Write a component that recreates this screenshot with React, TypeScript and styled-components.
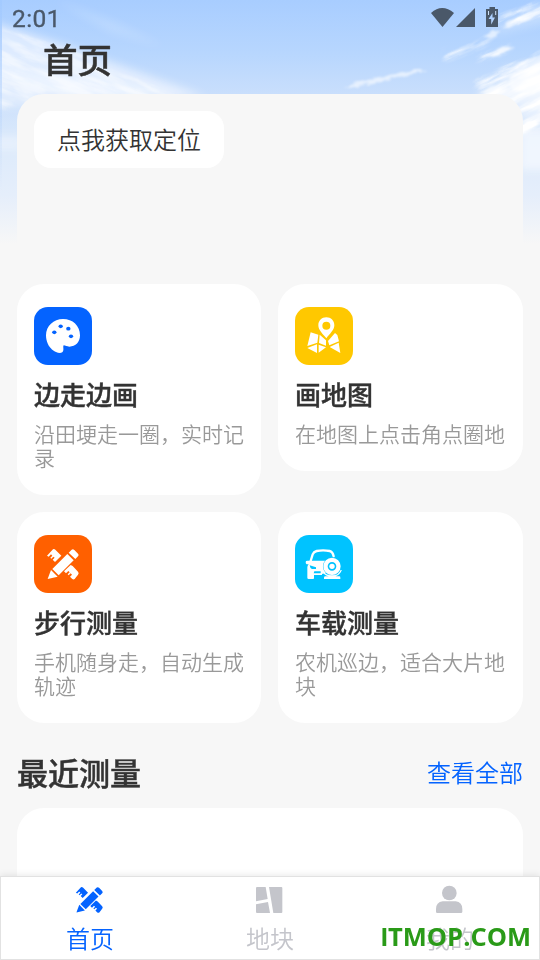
import React from "react";
import styled, { createGlobalStyle } from "styled-components";

const Global = createGlobalStyle`
  * { box-sizing: border-box; }
  body { margin: 0; background: #f7f7f7; }
`;

const Screen = styled.div`
  position: relative;
  width: 540px;
  height: 960px;
  overflow: hidden;
  display: flex;
  flex-direction: column;
  background: #f7f7f7;
  color: #333;
  font-family: "Noto Sans CJK SC", sans-serif;
  font-weight: 350;
`;

const Backdrop = styled.svg`
  position: absolute;
  top: 0;
  left: 0;
`;

const StatusBar = styled.div`
  position: relative;
  height: 38px;
  flex: none;
  display: flex;
  justify-content: space-between;
  padding: 0 41px 0 12px;
  color: #4a5869;
`;

const Clock = styled.span`
  font: 400 24.5px/38px Roboto, sans-serif;
  letter-spacing: 0.4px;
  -webkit-text-stroke: 0.35px currentColor;
`;

const StatusIcons = styled.svg`
  flex: none;
`;

const PageTitle = styled.h1`
  position: relative;
  flex: none;
  margin: 0;
  height: 56px;
  padding-left: 43px;
  font-size: 34.5px;
  font-weight: 500;
  line-height: 41px;
  -webkit-text-stroke: 0.5px currentColor;
`;

const Main = styled.main`
  position: relative;
  flex: 1;
  min-height: 0;
  overflow: hidden;
  padding: 0 17px;
`;

const MapPanel = styled.section`
  height: 173px;
  padding: 17px;
  background: #f7f7f7;
  border-radius: 27px 27px 0 0;
`;

const LocateButton = styled.button`
  display: block;
  width: 190px;
  height: 57px;
  padding: 0 0 1px;
  border: 0;
  border-radius: 17px;
  background: #fff;
  color: #333;
  font: 350 24px/56px "Noto Sans CJK SC", sans-serif;
`;

const Cards = styled.section`
  display: grid;
  grid-template-columns: 244px 245px;
  align-items: start;
  gap: 17px;
  margin-top: 17px;
`;

const Card = styled.article<{ $short?: boolean }>`
  height: ${(p) => (p.$short ? 187 : 211)}px;
  padding: 23px 16px 0 17px;
  border-radius: 27px;
  background: #fff;
`;

const CardIcon = styled.svg<{ $bg: string }>`
  display: block;
  width: 58px;
  height: 58px;
  border-radius: 14px;
  background: ${(p) => p.$bg};
`;

const CardTitle = styled.h2`
  margin: 10px 0 8px;
  font-size: 26px;
  font-weight: 500;
  line-height: 38px;
  -webkit-text-stroke: 0.4px currentColor;
`;

const CardText = styled.p`
  margin: 0;
  color: #999;
  font-size: 21px;
  line-height: 24px;
`;

const SectionHead = styled.header`
  display: flex;
  align-items: center;
  justify-content: space-between;
  height: 85px;
  padding-top: 13px;
`;

const SectionTitle = styled.h2`
  margin: 0;
  font-size: 31px;
  font-weight: 500;
  line-height: 54px;
  -webkit-text-stroke: 0.45px currentColor;
`;

const MoreLink = styled.a`
  color: #0463ff;
  font-size: 24px;
  line-height: 50px;
`;

const RecentPanel = styled.section`
  height: 120px;
  border-radius: 27px;
  background: #fff;
`;

const TabBar = styled.nav`
  position: relative;
  flex: none;
  height: 84px;
  display: grid;
  grid-template-columns: 178px 182px 1fr;
  border: 1px solid #e2e2e2;
  background: #fff;
  box-shadow: 0 -1px 7px rgba(0, 0, 0, 0.09);
`;

const Tab = styled.div<{ $active?: boolean }>`
  display: flex;
  flex-direction: column;
  align-items: center;
  color: ${(p) => (p.$active ? "#0463ff" : "#c4c5cb")};
  font-size: 24px;
  line-height: 34px;
`;

const TabIcon = styled.svg`
  width: 30px;
  height: 30px;
  margin: 8px 0 6px;
`;

const Watermark = styled.div`
  position: absolute;
  right: 9px;
  bottom: 6px;
  color: #2a9a18;
  font: 700 25.5px/34px "Open Sans", sans-serif;
`;

const PlainInitial = styled.span`
  font-family: "Liberation Sans", sans-serif;
  font-size: 26px;
`;

const Sky = () => (
  <Backdrop width="540" height="260" viewBox="0 0 540 260">
    <defs>
      <linearGradient id="sky" x1="0" y1="0" x2="0" y2="1">
        <stop offset="0" stopColor="#a8cdff" />
        <stop offset="0.2" stopColor="#b7d6fe" />
        <stop offset="0.37" stopColor="#cadffc" />
        <stop offset="0.55" stopColor="#dceafb" />
        <stop offset="0.75" stopColor="#e5eefb" />
        <stop offset="0.94" stopColor="#f7f7f7" />
      </linearGradient>
      <linearGradient id="edge" x1="0" y1="0" x2="0" y2="1">
        <stop offset="0" stopColor="#a3caff" />
        <stop offset="1" stopColor="#c3d9fa" stopOpacity="0" />
      </linearGradient>
      <filter id="soft" x="-20%" y="-50%" width="140%" height="200%">
        <feGaussianBlur stdDeviation="4" />
      </filter>
      <filter id="wisp" x="-20%" y="-30%" width="140%" height="160%">
        <feTurbulence type="fractalNoise" baseFrequency="0.025 0.14" numOctaves="4" seed="4" result="noise" />
        <feColorMatrix in="noise" type="matrix" values="0 0 0 0 1  0 0 0 0 1  0 0 0 0 1  2.8 0 0 0 -0.9" result="streaks" />
        <feGaussianBlur in="SourceGraphic" stdDeviation="2.2" result="shape" />
        <feDisplacementMap in="shape" in2="noise" scale="9" xChannelSelector="R" yChannelSelector="G" result="bent" />
        <feComposite in="bent" in2="streaks" operator="in" />
      </filter>
      <filter id="wispSmall" x="-10%" y="-100%" width="120%" height="300%">
        <feTurbulence type="fractalNoise" baseFrequency="0.09 0.2" numOctaves="3" seed="7" />
        <feDisplacementMap in="SourceGraphic" scale="6" xChannelSelector="R" yChannelSelector="G" />
        <feGaussianBlur stdDeviation="0.8" />
      </filter>
    </defs>
    <rect width="540" height="260" fill="url(#sky)" />
    <g fill="#f5f9ff" filter="url(#soft)">
      <path d="M-8 22 L60 43 L120 65 L205 96 L80 98 L-8 76Z" opacity=".62" />
      <path d="M-8 62 L30 73 L90 80 L200 97 L-8 108Z" opacity=".5" />
      <path d="M55 0 L115 22 L165 47 L110 32Z" opacity=".18" />
      <path d="M550 60 L510 82 L480 97 L520 110 L520 120 L550 120Z" opacity=".65" />
      <path d="M520 128 H550 V170 H520Z" opacity=".75" />
      <path d="M-8 136 H22 V150 H-8Z" opacity=".45" />
      <path d="M490 35 L515 14 L550 4 L550 22Z" opacity=".3" />
    </g>
    <g transform="rotate(21)" filter="url(#wisp)" fill="#fff">
      <path d="M8 26 L75 22 L150 25 L215 27 L160 50 L80 68 L20 120 L-30 140 L-30 26Z" opacity=".5" />
    </g>
    <g transform="translate(440 90) rotate(-25)" filter="url(#wisp)" fill="#fff">
      <path d="M34 6 L55 8 L77 6 L130 10 L150 80 L40 75Z" />
      <path d="M18 -32 L74 -28 L60 -22 L20 -25Z" opacity=".75" />
      <path d="M70 -38 L92 -41 L135 -34 L132 -25 L90 -30Z" />
      <path d="M55 -14 L85 -10 L66 -5 L44 -9Z" />
    </g>
    <path d="M475 99 Q486 82 500 82 Q525 66 550 55 V98Z" fill="#fff" opacity=".5" filter="url(#soft)" />
    <g fill="#fff" filter="url(#wispSmall)">
      <path d="M344 88 Q371 77 395 75 Q412 69 428 70 Q393 80 344 88Z" opacity=".6" />
      <path d="M482 58 Q493 48 516 46 Q502 57 482 58Z" opacity=".7" />
      <path d="M503 28 Q515 13 546 9 Q532 20 503 28Z" opacity=".6" />
      <path d="M485 36 L491 31 L502 31 L492 38Z" opacity=".6" />
      <path d="M507 86 Q511 71 522 66 L546 50 V85 L522 92Z" opacity=".5" />
    </g>
    <rect width="2" height="190" fill="url(#edge)" />
    <rect y="244" width="540" height="16" fill="#f7f7f7" />
  </Backdrop>
);

const Palette = () => (
  <CardIcon $bg="#0463ff" viewBox="42 36 174 174">
    <path fill="#fff" d="M129 72C158 72 180 92 180 121C180 141 167 155 148 155C141 155 136 151 131 151C128 156 132 162 129 169C126 176 115 174 108 171C89 163 78 143 78 121C78 93 101 72 129 72Z" />
    <g fill="#0463ff">
      <ellipse cx="103" cy="112" rx="6.5" ry="5.5" /><ellipse cx="122" cy="94" rx="6.5" ry="5.5" />
      <ellipse cx="145" cy="101" rx="6.5" ry="5.5" /><ellipse cx="153" cy="124" rx="6.5" ry="5.5" />
    </g>
  </CardIcon>
);

const MapPin = () => (
  <CardIcon $bg="#ffc800" viewBox="45 36 174 174">
    <g fill="#fff">
      <path fillRule="evenodd" d="M139 67C153 67 163 77 163 91C163 106 149 116 139 130C128 116 115 106 115 91C115 77 125 67 139 67ZM139 80A12 12 0 1 0 139 104A12 12 0 1 0 139 80Z" />
      <path d="M92 112L115 119L112 143L82 153ZM119 119L138 136V152L117 144ZM165 114L172 120L177 139L148 151L144 138Z" />
      <path d="M82 159L111 148L111 174ZM116 149L138 157L116 173ZM149 156L176 143L181 174Z" />
    </g>
  </CardIcon>
);

const RulerPencilShape = () => (
  <g fill="currentColor">
    <path d="M81 92L99 73Q102 70 106 74L124 92L105 111L98 104L104 98L100 95L94 101L91 98L97 92L93 88L86 95Z" />
    <path d="M152 120L158 123L174 140Q178 144 174 149L164 162Q160 165 156 161L150 155L156 149L152 145L146 151L143 148L149 142L145 138L138 145L132 139Z" />
    <path d="M146 83L155 74Q159 71 163 75L174 86Q178 90 174 94L166 102Z" />
    <path d="M142 87L161 106L116 151L97 132Z" />
    <path d="M93 135L113 155L83 162Z" />
  </g>
);

const RulerPencil = () => (
  <CardIcon $bg="#ff6000" color="#fff" viewBox="42 30 174 174">
    <RulerPencilShape />
  </CardIcon>
);

const Car = () => (
  <CardIcon $bg="#00c3ff" viewBox="45 30 174 174">
    <path d="M91 111L98 88Q101 80 110 78Q129 74 149 78Q158 80 161 94" fill="none" stroke="#fff" strokeWidth="7" strokeLinecap="round" />
    <path fill="#fff" d="M77 111Q77 107 82 107H136Q128 122 135 137L139 143L126 147V150H102V160Q102 162 99 162H86Q82 162 82 158V127Q82 122 86 118H80Q77 117 77 111Z" />
    <path fill="#00c3ff" d="M89 121L108 127V132H96Q90 130 89 121ZM103 139H122V145H101Z" />
    <circle cx="156" cy="124" r="27" fill="#00c3ff" />
    <path fill="#fff" fillRule="evenodd" d="M156 98A26 26 0 1 1 156 150A26 26 0 1 1 156 98ZM156 111A13 13 0 1 0 156 137A13 13 0 1 0 156 111Z" />
    <circle cx="156" cy="124" r="8" fill="#fff" />
    <path d="M127 137Q137 154 156 154Q176 154 184 135" fill="none" stroke="#fff" strokeWidth="3.5" />
    <path fill="#fff" d="M145 151H167V154H178Q181 154 181 158V162H132V158Q132 154 136 154H145Z" />
  </CardIcon>
);

const features = [
  { icon: <Palette />, title: "边走边画", text: "沿田埂走一圈，实时记录" },
  { icon: <MapPin />, title: "画地图", text: "在地图上点击角点圈地", short: true },
  { icon: <RulerPencil />, title: "步行测量", text: "手机随身走，自动生成轨迹" },
  { icon: <Car />, title: "车载测量", text: "农机巡边，适合大片地块" },
];

export default function App() {
  return (
    <Screen>
      <Global />
      <Sky />
      <StatusBar>
        <Clock>2:01</Clock>
        <StatusIcons width="70" height="38" viewBox="429 0 70 38" fill="currentColor">
          <path d="M431 13Q442 3 454 13L442.5 27Z" />
          <path d="M475 8V27H456Z" />
          <path fillRule="evenodd" d="M489.5 7H495V9H498V27H486V9H489.5ZM492.5 13L488.5 19H491.2V24.5L495 17.5H492.5Z" />
          <path d="M488.5 11V15M495.7 11V15" stroke="#cbdff8" strokeWidth="1" />
        </StatusIcons>
      </StatusBar>
      <PageTitle>首页</PageTitle>
      <Main>
        <MapPanel>
          <LocateButton>点我获取定位</LocateButton>
        </MapPanel>
        <Cards>
          {features.map((f) => (
            <Card key={f.title} $short={f.short}>
              {f.icon}
              <CardTitle>{f.title}</CardTitle>
              <CardText>{f.text}</CardText>
            </Card>
          ))}
        </Cards>
        <SectionHead>
          <SectionTitle>最近测量</SectionTitle>
          <MoreLink>查看全部</MoreLink>
        </SectionHead>
        <RecentPanel />
      </Main>
      <TabBar>
        <Tab $active>
          <TabIcon viewBox="78 65 106 106"><RulerPencilShape /></TabIcon>
          首页
        </Tab>
        <Tab>
          <TabIcon viewBox="225 45 90 90" fill="currentColor">
            <path d="M231 51H257L263 87L228 94V54Q228 51 231 51ZM267 51H304Q307 51 307 54V126Q307 129 304 129H280ZM228 103L264 96L270 129H231Q228 129 228 126Z" />
          </TabIcon>
          地块
        </Tab>
        <Tab>
          <TabIcon viewBox="225 45 90 90" fill="currentColor">
            <circle cx="268" cy="69" r="22" />
            <path d="M248 94H287Q307 97 307 117V125Q307 129 303 129H232Q228 129 228 125V117Q228 97 248 94Z" />
          </TabIcon>
          我的
        </Tab>
      </TabBar>
      <Watermark><PlainInitial>I</PlainInitial>TMOP.COM</Watermark>
    </Screen>
  );
}
